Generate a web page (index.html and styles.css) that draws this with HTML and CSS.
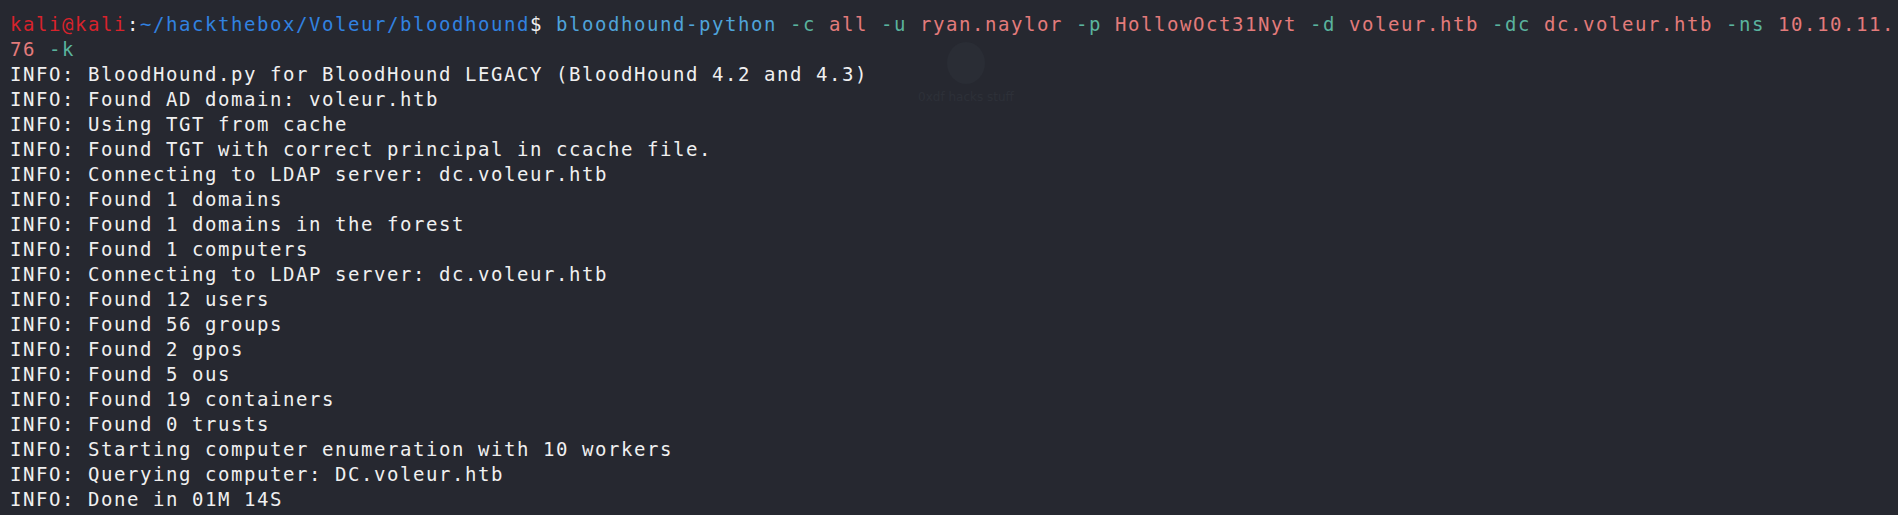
FILE: index.html
```html
<!DOCTYPE html>
<html lang="en">
<head>
<meta charset="utf-8">
<title>Terminal</title>
<link rel="stylesheet" href="styles.css">
</head>
<body>
<div class="term">
  <div class="line"><span class="user">kali@kali</span><span class="plain">:</span><span class="path">~/hackthebox/Voleur/bloodhound</span><span class="plain">$ </span><span class="cmd">bloodhound-python</span> <span class="opt">-c</span> <span class="arg">all</span> <span class="opt">-u</span> <span class="arg">ryan.naylor</span> <span class="opt">-p</span> <span class="arg">HollowOct31Nyt</span> <span class="opt">-d</span> <span class="arg">voleur.htb</span> <span class="opt">-dc</span> <span class="arg">dc.voleur.htb</span> <span class="opt">-ns</span> <span class="arg">10.10.11.</span></div>
  <div class="line"><span class="arg">76</span> <span class="opt">-k</span></div>
  <div class="line">INFO: BloodHound.py for BloodHound LEGACY (BloodHound 4.2 and 4.3)</div>
  <div class="line">INFO: Found AD domain: voleur.htb</div>
  <div class="line">INFO: Using TGT from cache</div>
  <div class="line">INFO: Found TGT with correct principal in ccache file.</div>
  <div class="line">INFO: Connecting to LDAP server: dc.voleur.htb</div>
  <div class="line">INFO: Found 1 domains</div>
  <div class="line">INFO: Found 1 domains in the forest</div>
  <div class="line">INFO: Found 1 computers</div>
  <div class="line">INFO: Connecting to LDAP server: dc.voleur.htb</div>
  <div class="line">INFO: Found 12 users</div>
  <div class="line">INFO: Found 56 groups</div>
  <div class="line">INFO: Found 2 gpos</div>
  <div class="line">INFO: Found 5 ous</div>
  <div class="line">INFO: Found 19 containers</div>
  <div class="line">INFO: Found 0 trusts</div>
  <div class="line">INFO: Starting computer enumeration with 10 workers</div>
  <div class="line">INFO: Querying computer: DC.voleur.htb</div>
  <div class="line">INFO: Done in 01M 14S</div>
  <div class="watermark" aria-hidden="true">
    <div class="wm-avatar"></div>
    <div class="wm-text">0xdf hacks stuff</div>
  </div>
</div>
</body>
</html>
```

FILE: styles.css
```css
html, body {
  margin: 0;
  padding: 0;
  background: #262830;
}

.term {
  position: relative;
  box-sizing: border-box;
  width: 1898px;
  height: 515px;
  overflow: hidden;
  padding: 12px 0 0 10px;
  background: #262830;
  color: #f0f0f0;
  font-family: "DejaVu Sans Mono", "Liberation Mono", monospace;
  font-size: 19px;
  letter-spacing: 1.56px;
  line-height: 25px;
}

.line {
  white-space: pre;
  height: 25px;
}

.user { color: #d8232c; }
.plain { color: #f0f0f0; }
.path { color: #3182e0; }
.cmd { color: #4fa3da; }
.opt { color: #5ab39e; }
.arg { color: #e37b7b; }

.watermark {
  position: absolute;
  left: 900px;
  top: 42px;
  width: 132px;
  display: flex;
  flex-direction: column;
  align-items: center;
  gap: 6px;
  pointer-events: none;
}

.wm-avatar {
  width: 38px;
  height: 42px;
  border-radius: 50%;
  background: #2a2d35;
}

.wm-text {
  font-family: "DejaVu Sans", sans-serif;
  font-size: 12px;
  letter-spacing: 0;
  line-height: 14px;
  color: #2d3038;
  white-space: nowrap;
}
```
